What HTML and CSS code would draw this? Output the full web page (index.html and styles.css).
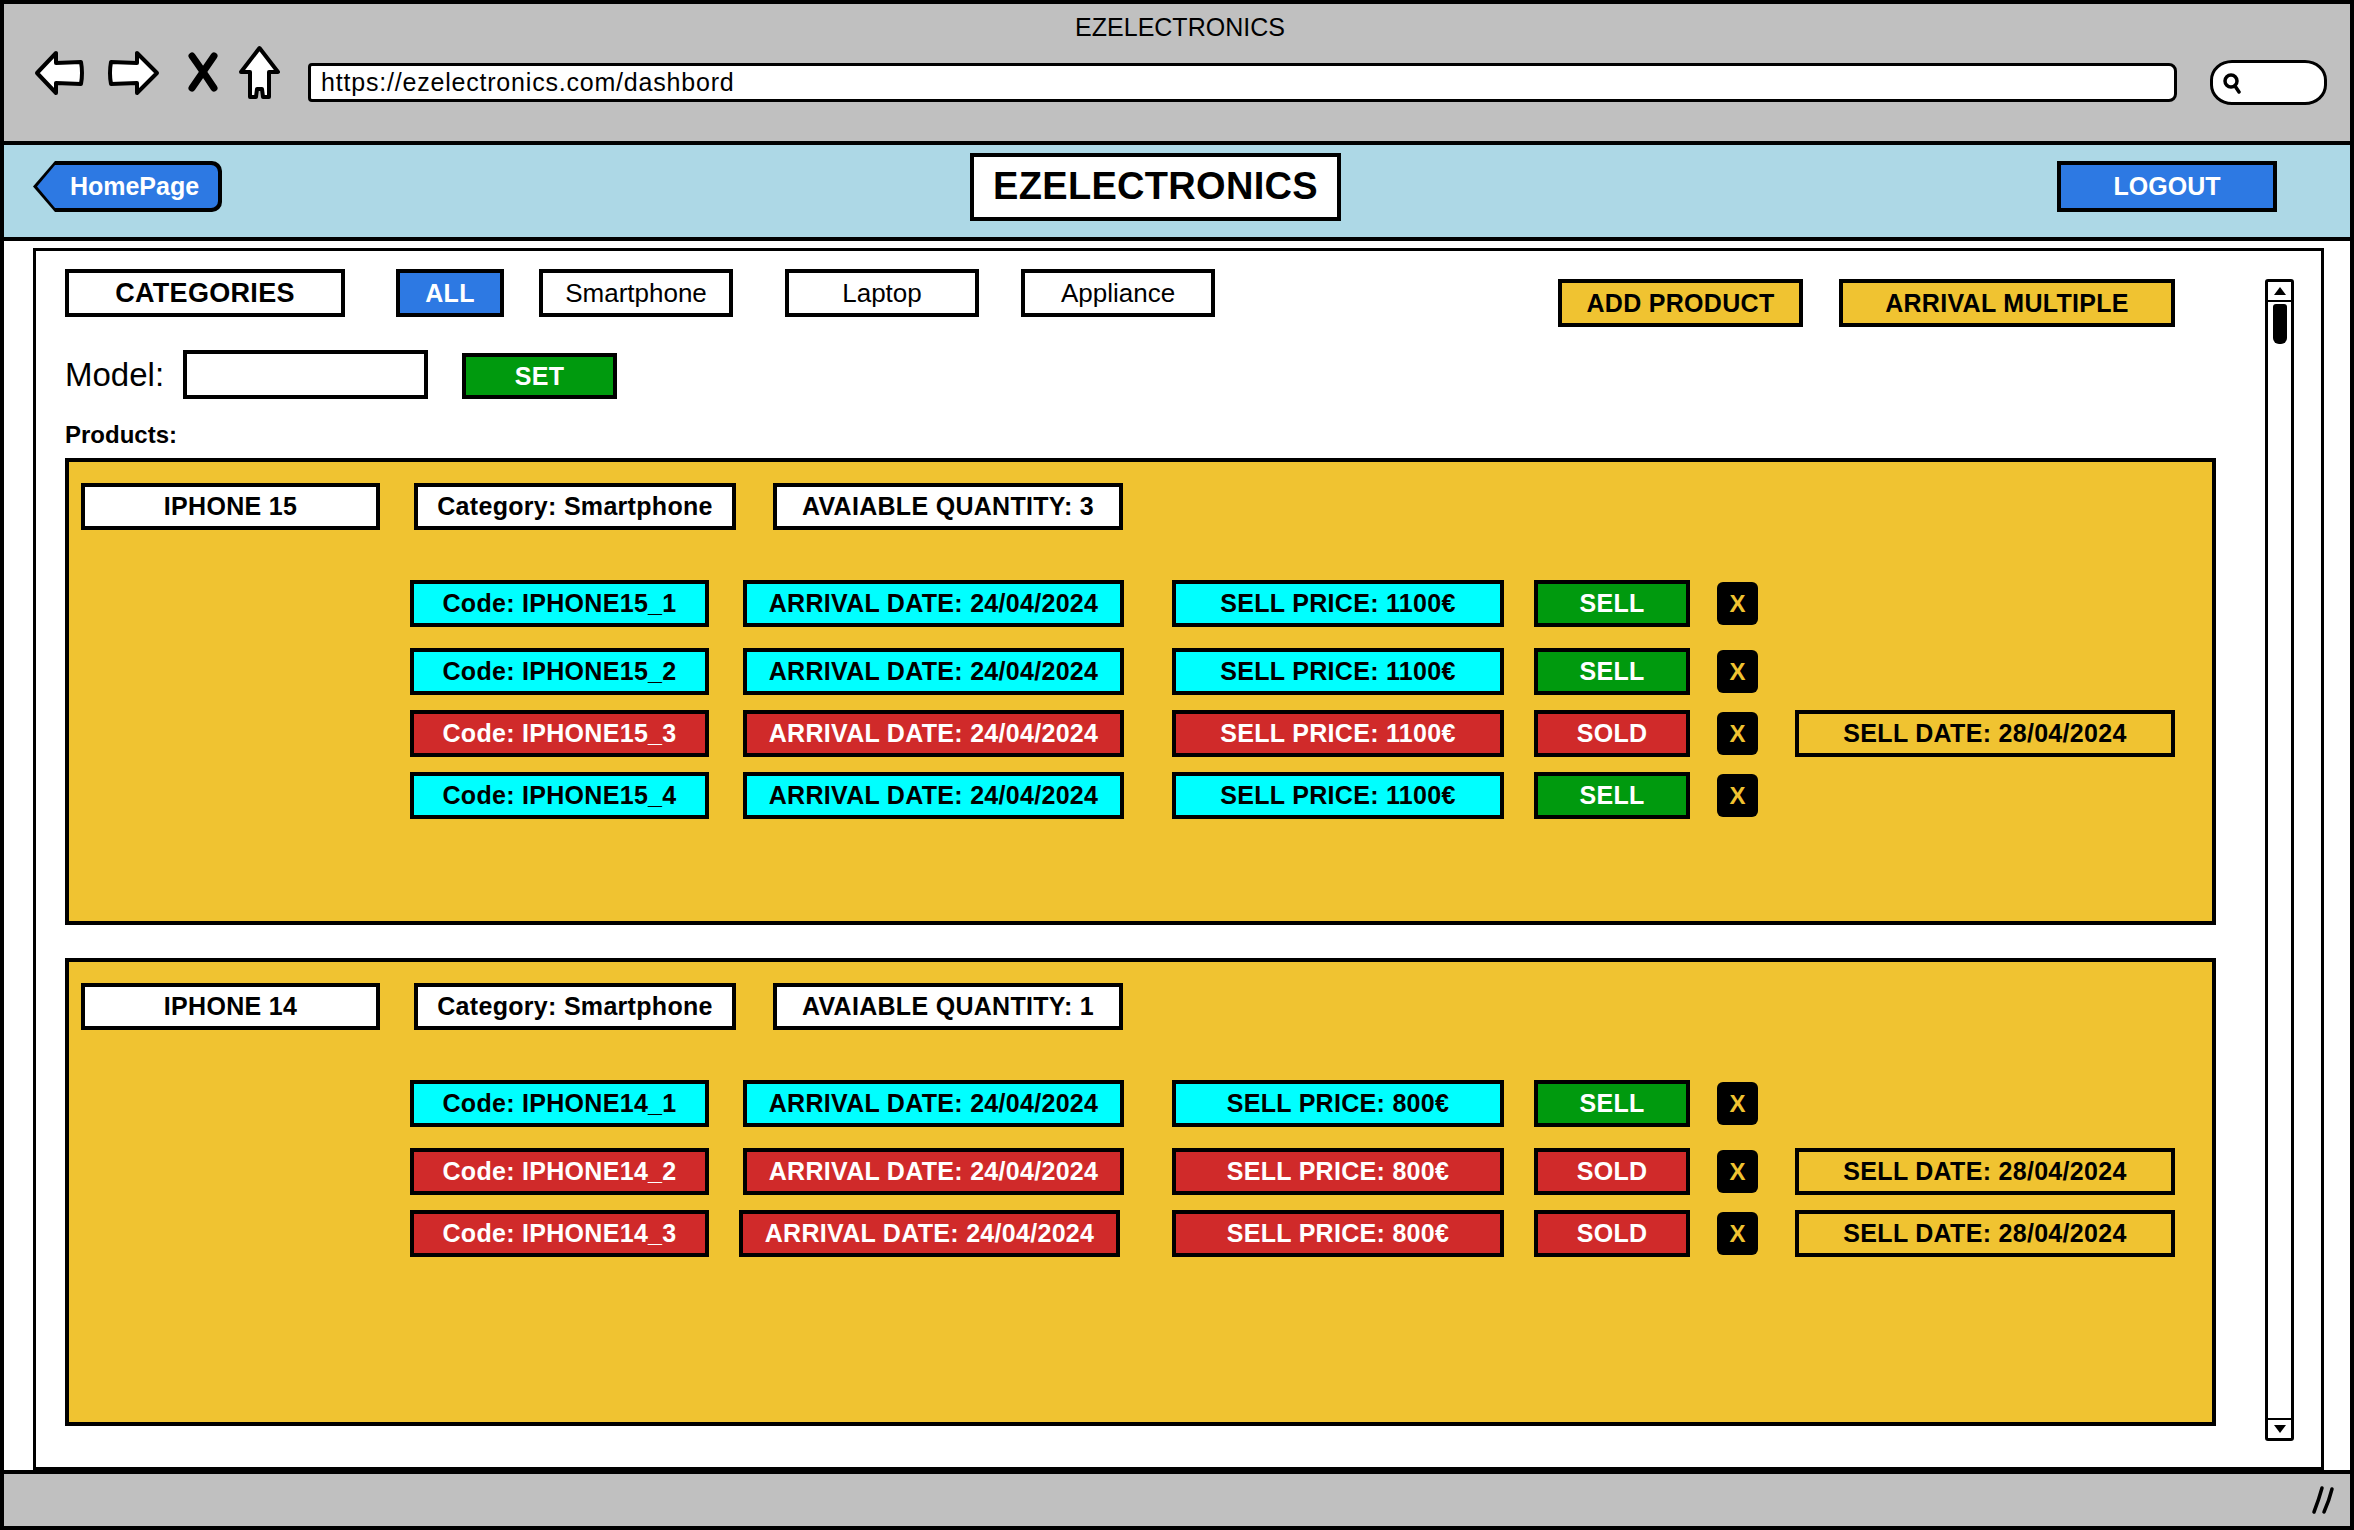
FILE: index.html
```html
<!DOCTYPE html>
<html lang="en">
<head>
<meta charset="utf-8">
<title>EZELECTRONICS</title>
<link rel="stylesheet" href="styles.css">
</head>
<body>
<div class="window">
  <header class="chrome">
    <div class="chrome-title">EZELECTRONICS</div>
    <div class="nav-row">
      <svg class="ic-back" width="53" height="50" viewBox="0 0 53 50"><path d="M4 25 L23 5 L23 15 L48 14 Q50 25 48 36 L23 35 L23 45 Z" fill="#fff" stroke="#000" stroke-width="4" stroke-linejoin="round"/></svg>
      <svg class="ic-fwd" width="56" height="50" viewBox="0 0 56 50"><path d="M52 25 L32 5 L32 15 L6 14 Q4 25 6 36 L32 35 L32 45 Z" fill="#fff" stroke="#000" stroke-width="4" stroke-linejoin="round"/></svg>
      <svg class="ic-x" width="36" height="40" viewBox="0 0 36 40"><path d="M7 4 Q17 18 29 36" fill="none" stroke="#000" stroke-width="7" stroke-linecap="round"/><path d="M29 4 Q18 20 7 36" fill="none" stroke="#000" stroke-width="7" stroke-linecap="round"/></svg>
      <svg class="ic-home" width="45" height="55" viewBox="0 0 45 55"><path d="M22.5 3 L41 27 L32 27 L32 52 L26 52 L25 44 L20 44 L19 52 L13 52 L13 27 L4 27 Z" fill="#fff" stroke="#000" stroke-width="4" stroke-linejoin="round"/></svg>
      <div class="url">https://ezelectronics.com/dashbord</div>
      <div class="search"><svg width="20" height="22" viewBox="0 0 20 22"><circle cx="9" cy="9" r="6" fill="none" stroke="#000" stroke-width="3.5"/><path d="M13 14 L17 20" stroke="#000" stroke-width="3.5" stroke-linecap="round"/></svg></div>
    </div>
  </header>

  <div class="appbar">
    <div class="home-btn"><div class="home-inner">HomePage</div></div>
    <div class="brand">EZELECTRONICS</div>
    <div class="logout">LOGOUT</div>
  </div>

  <main class="content">
    <div class="panel">
      <div class="main-col">
        <div class="toolbar">
          <div class="box white w-cat">CATEGORIES</div>
          <div class="box blue w-all">ALL</div>
          <div class="box white regular w-smart">Smartphone</div>
          <div class="box white regular w-laptop">Laptop</div>
          <div class="box white regular w-appl">Appliance</div>
          <div class="box yellow w-add">ADD PRODUCT</div>
          <div class="box yellow w-multi">ARRIVAL MULTIPLE</div>
        </div>

        <div class="model-row">
          <span class="model-label">Model:</span>
          <div class="model-input"></div>
          <div class="box green w-set">SET</div>
        </div>

        <div class="products-label">Products:</div>

        <section class="product first">
          <div class="product-head">
            <div class="box white h-name">IPHONE 15</div>
            <div class="box white h-cat">Category: Smartphone</div>
            <div class="box white h-qty">AVAIABLE QUANTITY: 3</div>
          </div>
          <div class="items">
            <div class="item-row">
              <div class="box cyan c-code">Code: IPHONE15_1</div>
              <div class="box cyan c-date">ARRIVAL DATE: 24/04/2024</div>
              <div class="box cyan c-price">SELL PRICE: 1100€</div>
              <div class="box green c-act">SELL</div>
              <div class="del">X</div>
            </div>
            <div class="item-row gap-lg">
              <div class="box cyan c-code">Code: IPHONE15_2</div>
              <div class="box cyan c-date">ARRIVAL DATE: 24/04/2024</div>
              <div class="box cyan c-price">SELL PRICE: 1100€</div>
              <div class="box green c-act">SELL</div>
              <div class="del">X</div>
            </div>
            <div class="item-row">
              <div class="box red c-code">Code: IPHONE15_3</div>
              <div class="box red c-date">ARRIVAL DATE: 24/04/2024</div>
              <div class="box red c-price">SELL PRICE: 1100€</div>
              <div class="box red c-act">SOLD</div>
              <div class="del">X</div>
              <div class="box yellow c-sold">SELL DATE: 28/04/2024</div>
            </div>
            <div class="item-row">
              <div class="box cyan c-code">Code: IPHONE15_4</div>
              <div class="box cyan c-date">ARRIVAL DATE: 24/04/2024</div>
              <div class="box cyan c-price">SELL PRICE: 1100€</div>
              <div class="box green c-act">SELL</div>
              <div class="del">X</div>
            </div>
          </div>
        </section>

        <section class="product second">
          <div class="product-head">
            <div class="box white h-name">IPHONE 14</div>
            <div class="box white h-cat">Category: Smartphone</div>
            <div class="box white h-qty">AVAIABLE QUANTITY: 1</div>
          </div>
          <div class="items">
            <div class="item-row">
              <div class="box cyan c-code">Code: IPHONE14_1</div>
              <div class="box cyan c-date">ARRIVAL DATE: 24/04/2024</div>
              <div class="box cyan c-price">SELL PRICE: 800€</div>
              <div class="box green c-act">SELL</div>
              <div class="del">X</div>
            </div>
            <div class="item-row gap-lg">
              <div class="box red c-code">Code: IPHONE14_2</div>
              <div class="box red c-date">ARRIVAL DATE: 24/04/2024</div>
              <div class="box red c-price">SELL PRICE: 800€</div>
              <div class="box red c-act">SOLD</div>
              <div class="del">X</div>
              <div class="box yellow c-sold">SELL DATE: 28/04/2024</div>
            </div>
            <div class="item-row">
              <div class="box red c-code">Code: IPHONE14_3</div>
              <div class="box red c-date shift">ARRIVAL DATE: 24/04/2024</div>
              <div class="box red c-price">SELL PRICE: 800€</div>
              <div class="box red c-act">SOLD</div>
              <div class="del">X</div>
              <div class="box yellow c-sold">SELL DATE: 28/04/2024</div>
            </div>
          </div>
        </section>
      </div>

      <div class="scrollbar">
        <div class="sb-up"><svg width="14" height="10" viewBox="0 0 14 10"><path d="M7 1 L13 9 L1 9 Z" fill="#000"/></svg></div>
        <div class="sb-thumb"></div>
        <div class="sb-track"></div>
        <div class="sb-down"><svg width="14" height="10" viewBox="0 0 14 10"><path d="M1 1 L13 1 L7 9 Z" fill="#000"/></svg></div>
      </div>
    </div>
  </main>

  <footer class="status">
    <svg width="26" height="30" viewBox="0 0 26 30"><path d="M12 3 Q9 14 4 27" fill="none" stroke="#000" stroke-width="3.5" stroke-linecap="round"/><path d="M22 4 Q19 16 14 27" fill="none" stroke="#000" stroke-width="3.5" stroke-linecap="round"/></svg>
  </footer>
</div>
</body>
</html>
```

FILE: styles.css
```css
* { box-sizing: border-box; }
html, body { margin: 0; padding: 0; }
body {
  width: 2354px;
  height: 1530px;
  overflow: hidden;
  background: #fff;
  color: #000;
  font-family: "Liberation Sans", Arial, sans-serif;
}

.window {
  width: 2354px;
  height: 1530px;
  border: 4px solid #000;
  display: flex;
  flex-direction: column;
}

/* ---------- browser chrome ---------- */
.chrome {
  height: 141px;
  background: #c0c0c0;
  border-bottom: 4px solid #000;
  padding: 8px 23px 0 29px;
}
.chrome-title {
  text-align: center;
  font-size: 25px;
  line-height: 30px;
}
.nav-row {
  display: flex;
  align-items: flex-start;
  margin-top: 6px;
}
.ic-fwd { margin-left: 19px; }
.ic-x { margin-left: 24px; margin-top: 4px; }
.ic-home { margin-left: 16px; margin-top: -3px; }
.url {
  margin-left: 26px;
  margin-top: 15px;
  width: 1869px;
  height: 39px;
  background: #fff;
  border: 3px solid #000;
  border-radius: 4px 8px 8px 4px;
  font-size: 25px;
  line-height: 33px;
  padding-left: 10px;
  letter-spacing: 0.8px;
}
.search {
  margin-left: 33px;
  margin-top: 12px;
  width: 117px;
  height: 45px;
  background: #fff;
  border: 3px solid #000;
  border-radius: 22px / 20px;
  display: flex;
  align-items: center;
  padding-left: 9px;
}

/* ---------- app header ---------- */
.appbar {
  height: 96px;
  background: #add8e6;
  border-bottom: 4px solid #000;
  display: flex;
  align-items: center;
  padding: 0 73px 9px 29px;
}
.home-btn {
  width: 189px;
  height: 51px;
  background: #000;
  padding: 4px;
  border-radius: 0 10px 10px 0;
  clip-path: polygon(22px 0, 100% 0, 100% 100%, 22px 100%, 0 50%);
}
.home-inner {
  height: 100%;
  background: #2d79e3;
  color: #fff;
  font-weight: bold;
  font-size: 25px;
  display: flex;
  align-items: center;
  justify-content: center;
  padding-left: 14px;
  border-radius: 0 7px 7px 0;
  clip-path: polygon(18px 0, 100% 0, 100% 100%, 18px 100%, 0 50%);
}
.brand {
  margin-left: 748px;
  width: 371px;
  height: 68px;
  background: #fff;
  border: 4px solid #000;
  font-weight: bold;
  font-size: 38px;
  display: flex;
  align-items: center;
  justify-content: center;
  letter-spacing: 0.3px;
}
.logout {
  margin-left: auto;
  width: 220px;
  height: 51px;
  background: #2d79e3;
  border: 4px solid #000;
  color: #fff;
  font-weight: bold;
  font-size: 25px;
  display: flex;
  align-items: center;
  justify-content: center;
}

/* ---------- content ---------- */
.content {
  flex: 1;
  display: flex;
  padding: 7px 26px 0 29px;
}
.panel {
  flex: 1;
  display: flex;
  border: 3px solid #000;
  padding: 18px 27px 0 29px;
}
.main-col {
  flex: 1;
  display: flex;
  flex-direction: column;
}

.box {
  border: 4px solid #000;
  display: flex;
  align-items: center;
  justify-content: center;
  font-weight: bold;
  font-size: 25px;
  letter-spacing: 0.3px;
  white-space: nowrap;
  height: 47px;
}
.regular { font-weight: normal; font-size: 26px; letter-spacing: 0; }
.white { background: #fff; }
.blue { background: #2d79e3; color: #fff; }
.yellow { background: #f0c331; }
.cyan { background: #00ffff; }
.red { background: #d02a2a; color: #fff; }
.green { background: #009a0e; color: #fff; }

/* toolbar */
.toolbar {
  display: flex;
  align-items: flex-start;
  height: 58px;
}
.toolbar .box { height: 48px; }
.w-cat { width: 280px; font-size: 27px; }
.w-all { width: 108px; margin-left: 51px; }
.w-smart { width: 194px; margin-left: 35px; }
.w-laptop { width: 194px; margin-left: 52px; }
.w-appl { width: 194px; margin-left: 42px; }
.w-add { width: 245px; margin-left: auto; margin-top: 10px; }
.w-multi { width: 336px; margin-left: 36px; margin-right: 41px; margin-top: 10px; }

/* model row */
.model-row {
  display: flex;
  align-items: center;
  height: 49px;
  margin-top: 23px;
}
.model-label { font-size: 33px; width: 100px; }
.model-input {
  margin-left: 18px;
  width: 245px;
  height: 49px;
  border: 4px solid #000;
  background: #fff;
}
.w-set { margin-left: 34px; width: 155px; height: 46px; margin-top: 3px; }

.products-label {
  margin-top: 22px;
  font-size: 24px;
  font-weight: bold;
  line-height: 28px;
}

/* product cards */
.product {
  background: #f0c331;
  border: 4px solid #000;
  height: 467px;
  padding: 21px 12px;
}
.product.first { margin-top: 9px; }
.product.second { margin-top: 33px; height: 468px; }

.product-head { display: flex; }
.h-name { width: 299px; }
.h-cat { width: 322px; margin-left: 34px; }
.h-qty { width: 350px; margin-left: 37px; }

.items {
  margin-top: 50px;
  padding-left: 329px;
  display: flex;
  flex-direction: column;
  gap: 15px;
}
.item-row { display: flex; align-items: center; }
.item-row.gap-lg { margin-top: 6px; }
.c-code { width: 299px; }
.c-date { width: 381px; margin-left: 34px; }
.c-date.shift { margin-left: 30px; margin-right: 4px; }
.c-price { width: 332px; margin-left: 48px; }
.c-act { width: 156px; margin-left: 30px; }
.del {
  margin-left: 27px;
  width: 41px;
  height: 43px;
  background: #000;
  border-radius: 6px;
  color: #f0c331;
  font-weight: bold;
  font-size: 24px;
  display: flex;
  align-items: center;
  justify-content: center;
}
.c-sold { width: 380px; margin-left: 37px; }

/* scrollbar */
.scrollbar {
  width: 29px;
  height: 1162px;
  margin: 10px 0 0 49px;
  border: 3px solid #000;
  border-radius: 3px;
  background: #fff;
  display: flex;
  flex-direction: column;
  align-items: center;
}
.sb-up, .sb-down {
  width: 100%;
  height: 20px;
  display: flex;
  align-items: center;
  justify-content: center;
}
.sb-up { border-bottom: 2px solid #000; }
.sb-down { border-top: 2px solid #000; }
.sb-thumb {
  width: 14px;
  height: 40px;
  margin-top: 2px;
  background: #000;
  border-radius: 3px 3px 6px 6px;
}
.sb-track { flex: 1; }

/* status bar */
.status {
  height: 56px;
  background: #c0c0c0;
  border-top: 4px solid #000;
  display: flex;
  align-items: center;
  justify-content: flex-end;
  padding-right: 14px;
}
```
